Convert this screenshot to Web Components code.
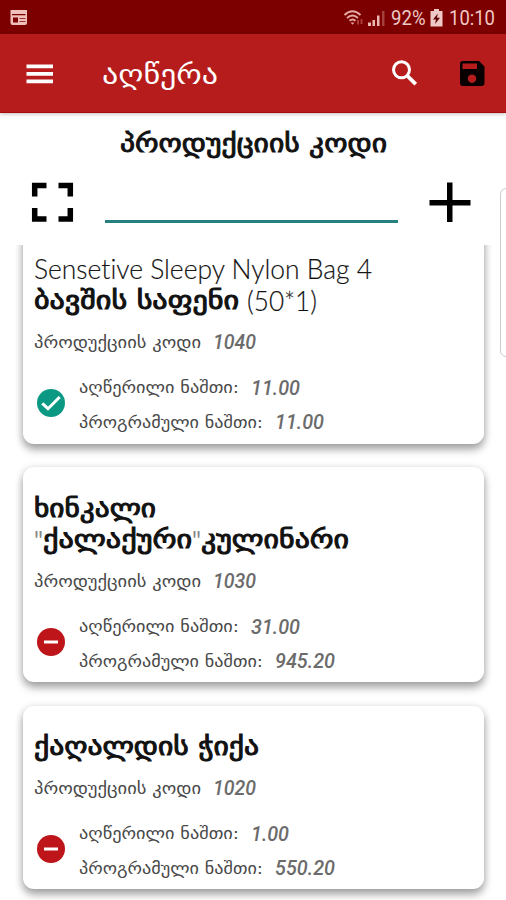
<!DOCTYPE html>
<html lang="ka">
<head>
<meta charset="utf-8">
<title>აღწერა</title>
<style>
html,body{margin:0;padding:0}
body{width:506px;height:900px;overflow:hidden;background:#fff;font-family:"DejaVu Sans",sans-serif}
</style>
</head>
<body>
<inventory-app></inventory-app>
<script>
const define=(name,html,setup)=>customElements.define(name,class extends HTMLElement{
  connectedCallback(){
    if(this.shadowRoot)return;
    this.attachShadow({mode:'open'}).innerHTML=html;
    if(setup)setup(this,this.shadowRoot);
  }
});

/* A single line of text condensed or widened to a set width. */
define('fit-text',`<style>
:host{display:inline-block;white-space:pre;flex:none;font-variant-ligatures:none}
span{display:inline-block;transform-origin:0 50%;white-space:pre}
</style><span></span>`,(el,root)=>{
  const s=root.querySelector('span');
  s.textContent=el.getAttribute('text');
  const w=+el.getAttribute('w'),n=s.getBoundingClientRect().width;
  el.style.width=w+'px';
  s.style.transform=`scaleX(${w/n})`;
});

define('status-bar',`<style>
:host{display:flex;align-items:center;height:34px;background:#7d0000;color:#efc9c5;box-sizing:border-box;padding:1px 11px 0 9px;font:20.500px Roboto,sans-serif}
.gap{flex:1}
svg{display:block;flex:none}
.wifi{margin-right:3px}.sig{margin-right:6px}.bat{margin:0 6px 0 5px}
</style>
<svg width="20" height="18" viewBox="0 0 20 18"><path fill="#efc0bb" fill-rule="evenodd" d="M1.500 1h16.500v13q0 2-2 2H3.500q-2 0-2-2zM3 5v1.300h13.500V5zM4 8.500v5h5v-5zM10.500 9v.7h6V9zM10.500 12v.7h6V12z"/></svg>
<span class="gap"></span>
<svg class="wifi" width="22" height="18" viewBox="0 0 22 18" fill="none" stroke="#e5aaa5" stroke-width="1.900"><path d="M1.500 6Q9.500-1.500 17.500 6M4 9Q9.500 4 15 9M6.500 11.800Q9.500 9 12.500 11.800"/><path d="M7.500 13.500h4l-2 2.300z" fill="#e5aaa5" stroke="none"/><path d="M15 11v4.500M18.500 10v5" stroke="#a83c38" stroke-width="2"/></svg>
<svg class="sig" width="17" height="18" viewBox="0 0 17 18"><path fill="#e9b8b3" d="M0 13.500h3V17H0zM4.500 11h2.500v6H4.500zM9 6.500h2.500V17H9z"/><path fill="#a3403c" d="M14 2h2.500v15H14z"/></svg>
<fit-text text="92%" w="34.500"></fit-text>
<svg class="bat" width="13" height="18" viewBox="0 0 13 18"><path fill="#efc9c5" d="M4 0h5v2h3.500v15.500H.5V2H4z"/><path fill="#5d0000" d="M7.800 4.500 3 10.500h3L5 15l5-6.300H7z"/></svg>
<fit-text text="10:10" w="46"></fit-text>`);

define('app-bar',`<style>
:host{display:flex;align-items:center;height:79px;background:#b71c1c;color:#fff;border-bottom:1px solid #a80c0c;box-sizing:border-box;box-shadow:0 1px 4px #0004;padding:0 20px 0 26px;position:relative}
svg{display:block;flex:none}
fit-text{font-size:28px;margin-left:48px;line-height:32px;margin-top:4px}
.gap{flex:1}.search{margin-right:42px;margin-top:-1px}
.menu{margin-top:2px}.save{margin-top:1px}
</style>
<svg class="menu" width="28" height="20" viewBox="0 0 28 20"><path fill="#fff" d="M.5.5h26.500v3.700H.5zM.5 8h26.500v3.700H.5zM.5 15.500h26.500v3.700H.5z"/></svg>
<fit-text text="აღწერა" w="116"></fit-text>
<span class="gap"></span>
<svg class="search" width="26" height="26" viewBox="0 0 26 26" fill="none" stroke="#fff"><circle cx="10.500" cy="9.800" r="8" stroke-width="3"/><path d="m16 15.500 8.700 8.700" stroke-width="3.800"/></svg>
<svg class="save" width="27" height="27" viewBox="0 0 27 27"><path fill="#080000" fill-rule="evenodd" d="M4 1h16l5.500 5.500V23q0 3-3 3H4q-3 0-3-3V4q0-3 3-3zM3.500 3.500V9H18V3.500zM13 14.500a4.200 4.200 0 1 0 .01 0z"/></svg>`);

define('code-panel',`<style>
:host{display:flex;flex-direction:column;height:132px;background:#fff}
.h{display:flex;justify-content:center;padding-top:16px;-webkit-text-stroke:.9px #111;font-size:24.500px;line-height:30px;color:#111}
.row{display:flex;align-items:flex-start;padding:23px 35px 0 31px;justify-content:space-between}
input{box-sizing:border-box;width:293px;height:41px;border:0;border-bottom:3px solid #26807f;background:none;padding:0;outline:0}
svg{display:block}
</style>
<div class="h"><fit-text text="პროდუქციის კოდი" w="267"></fit-text></div>
<div class="row">
<svg width="43" height="41" viewBox="0 0 43 41"><path fill="none" stroke="#000" stroke-width="5.500" d="M3.700 14.500V3.500H15.500M27.500 3.500H39.300V14.500M39.300 26V37H27.500M15.500 37H3.700V26"/></svg>
<input type="text" aria-label="პროდუქციის კოდი">
<svg width="42" height="41" viewBox="0 0 42 41"><path fill="#000" d="M18 .500h5.500v17.500H41.500v5.500H23.500V40H18V23.500H.500V18H18z"/></svg>
</div>`);

define('status-icon',`<style>:host{display:block;width:28px;height:28px}svg{display:block}</style><svg width="28" height="28" viewBox="0 0 28 28"></svg>`,(el,root)=>{
  root.querySelector('svg').innerHTML=el.getAttribute('kind')==='ok'
   ?'<circle cx="14" cy="14" r="14" fill="#0b9984"/><path d="m5.300 14.300 5.700 5.400L22.700 8" fill="none" stroke="#fff" stroke-width="3"/>'
   :'<circle cx="14" cy="14" r="14" fill="#bd1519"/><path d="M7 14h14" stroke="#fff" stroke-width="3"/>';
});

/* Title lines come through the slot; codes and stock counts are attributes. */
class StockCard extends HTMLElement{
  connectedCallback(){
    const a=k=>this.getAttribute(k);
    const val=(text,w)=>`<fit-text class="n" text="${text}" w="${w}"></fit-text>`;
    const root=this.attachShadow({mode:'open'});
    root.innerHTML=`<style>
:host{display:block;box-sizing:border-box;width:461px;height:var(--h);background:#fff;border-radius:11px;box-shadow:0 6px 8px #0004,0 2px 8px #0003;padding:25px 12px 0 11px}
.line{display:flex;align-items:center;height:34.500px}
.code{padding-top:9px}
.stock{display:flex;align-items:center;padding:11px 0 0 3px}
status-icon{margin-right:14px;margin-top:-5px}
.l{font-size:16.500px;line-height:24px;color:#484848;margin-right:12px;margin-top:1px}
.n{font:italic 500 19.500px/24px Roboto,sans-serif;color:#6b6b6b;margin-top:2px}
</style>
<div><slot></slot></div>
<div class="line code"><fit-text class="l" text="პროდუქციის კოდი" w="167"></fit-text>${val(a('code'),43)}</div>
<div class="stock"><status-icon kind="${a('kind')}"></status-icon><div>
<div class="line"><fit-text class="l" text="აღწერილი ნაშთი:" w="160"></fit-text>${val(a('counted'),a('cw'))}</div>
<div class="line"><fit-text class="l" text="პროგრამული ნაშთი:" w="184"></fit-text>${val(a('system'),a('sw'))}</div>
</div></div>`;
  }
}
customElements.define('stock-card',StockCard);

define('inventory-app',`<style>
:host{display:flex;flex-direction:column;width:506px;height:900px;overflow:hidden;position:relative}
status-bar,app-bar,code-panel{flex:none}
.list{flex:1;overflow:hidden;min-height:0}
.col{display:flex;flex-direction:column;gap:23.500px;margin:-17px 0 0 23px}
.t{display:flex;height:31.500px;align-items:center;font-size:25.500px;-webkit-text-stroke:1px #111;line-height:31px;color:#111}
.t fit-text{margin-top:1px}
.t .lat{font-family:Lato,sans-serif;font-weight:300;font-size:26.500px;-webkit-text-stroke:.15px #222;margin-top:2px}
.t .q{color:#888;-webkit-text-stroke:0;font-weight:400}
.edge{position:absolute;left:500px;top:188px;width:20px;height:167px;border:1px solid #ccc;border-radius:6px;background:#fff}
</style>
<status-bar></status-bar>
<app-bar></app-bar>
<code-panel></code-panel>
<div class="list"><div class="col">
<stock-card style="--h:215.500px" kind="ok" code="1040" counted="11.00" cw="49" system="11.00" sw="49">
<div class="t"><fit-text class="lat" text="Sensetive Sleepy Nylon Bag 4" w="338"></fit-text></div>
<div class="t"><fit-text text="ბავშის საფენი" w="205"></fit-text><fit-text class="lat" style="margin-left:8px" text="(50*1)" w="70"></fit-text></div>
</stock-card>
<stock-card style="--h:215px" kind="minus" code="1030" counted="31.00" cw="49" system="945.20" sw="60">
<div class="t"><fit-text text="ხინკალი" w="122"></fit-text></div>
<div class="t"><fit-text class="lat q" text='"' w="9"></fit-text><fit-text text="ქალაქური" w="149"></fit-text><fit-text class="lat q" text='"' w="9"></fit-text><fit-text text="კულინარი" w="148"></fit-text></div>
</stock-card>
<stock-card style="--h:183.500px" kind="minus" code="1020" counted="1.00" cw="38" system="550.20" sw="60">
<div class="t"><fit-text text="ქაღალდის ჭიქა" w="225"></fit-text></div>
</stock-card>
</div></div>
<div class="edge"></div>`);
</script>
</body>
</html>
